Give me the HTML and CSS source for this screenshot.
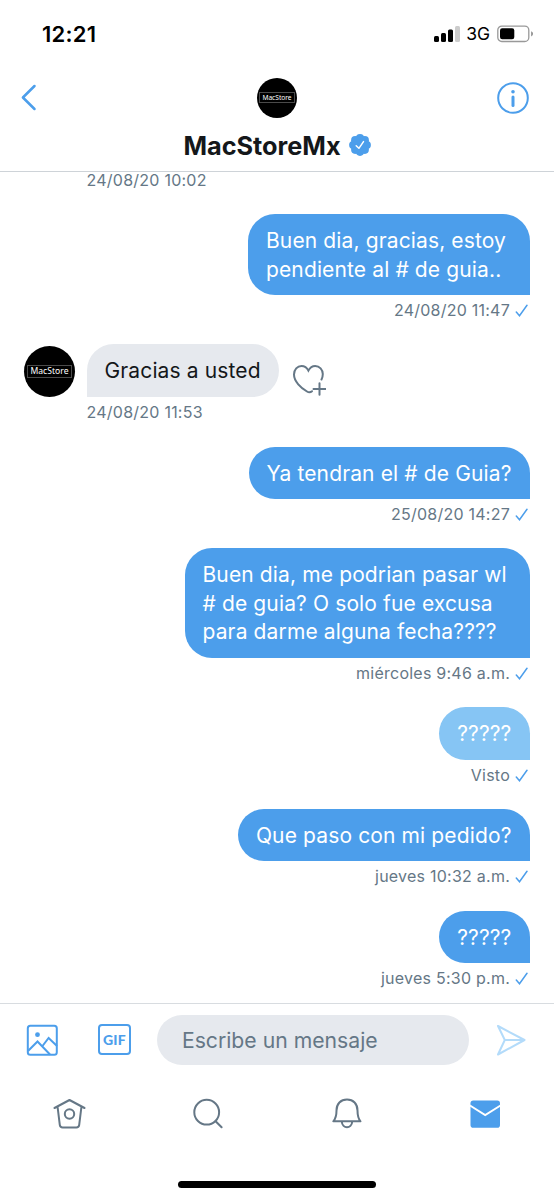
FILE: index.html
```html
<!DOCTYPE html>
<html lang="es">
<head>
<meta charset="utf-8">
<title>MacStoreMx</title>
<link rel="stylesheet" href="styles.css">
</head>
<body>
<div class="phone">
  <div class="status">
    <span class="clock">12:21</span>
    <div class="status-right">
      <svg class="signal" width="26" height="16" viewBox="0 0 26 16"><rect x="0" y="10" width="5" height="6" rx="1.5"/><rect x="7" y="7" width="5" height="9" rx="1.5"/><rect x="14" y="3.5" width="5" height="12.5" rx="1.5"/><rect x="21" y="0" width="5" height="16" rx="1.5" fill="#ccc"/></svg>
      <span class="network">3G</span>
      <svg class="battery" width="37" height="18" viewBox="0 0 37 18"><rect x=".8" y="1.1" width="31" height="15.4" rx="4" fill="none" stroke="#999" stroke-width="1.3"/><rect x="3" y="3.3" width="14.3" height="11" rx="2.2"/><path d="M34.2 6.2v5.2q1.8-.8 1.8-2.6t-1.8-2.6z" fill="#888"/></svg>
    </div>
  </div>

  <header class="header">
    <svg class="back" width="16" height="28" viewBox="0 0 16 28"><path d="M13.5 2 1.900 13.500 13.500 25"/></svg>
    <div class="avatar avatar-small"><span>MacStore</span></div>
    <svg class="info" width="34" height="34" viewBox="0 0 34 34"><circle cx="17" cy="17" r="14.8"/><path d="M17 16v8.5" class="info-stem"/><circle cx="17" cy="10.8" r="1.8" class="info-dot"/></svg>
  </header>
  <div class="title">
    <span class="name">MacStoreMx</span>
    <svg class="verified" width="22" height="22" viewBox="0 0 22 22"><g fill="#4c9eeb"><circle cx="11" cy="11" r="9"/><circle cx="11" cy="4.200" r="4.100"/><circle cx="15.800" cy="6.200" r="4.100"/><circle cx="17.800" cy="11" r="4.100"/><circle cx="15.800" cy="15.800" r="4.100"/><circle cx="11" cy="17.800" r="4.100"/><circle cx="6.200" cy="15.800" r="4.100"/><circle cx="4.200" cy="11" r="4.100"/><circle cx="6.200" cy="6.200" r="4.100"/></g><path d="M7.200 11.700l2.700 2.600 4.600-6.700" fill="none" stroke="#fff" stroke-width="1.500" stroke-linecap="round" stroke-linejoin="round"/></svg>
  </div>

  <main class="messages">
    <div class="meta meta-in meta-first"><span>24/08/20 10:02</span></div>

    <div class="bubble out two-line">Buen dia, gracias, estoy<br>pendiente al # de guia..</div>
    <div class="meta"><span>24/08/20 11:47</span><svg class="tick" width="13" height="13" viewBox="0 0 13 13"><path d="M1.300 8l3.200 3.700L12 1.300"/></svg></div>

    <div class="incoming">
      <div class="avatar avatar-large"><span>MacStore</span></div>
      <div class="bubble in">Gracias a usted</div>
      <svg class="react" width="34" height="32" viewBox="0 0 34 32"><path d="M20 27.2C18.5 28.5 16.8 28.6 15 27.5 9 24 2 17.5 2 10.5 2 5.5 5.4 2 9.5 2c3 0 5.5 1.8 6.9 4.6C17.9 3.8 20.2 2 23.2 2c4.300 0 7.600 3.500 7.600 8.100 0 1.900-.4 3.700-1.300 5.400M27.500 19.200v11.600M21.500 25h12"/></svg>
    </div>
    <div class="meta meta-in"><span>24/08/20 11:53</span></div>

    <div class="bubble out">Ya tendran el # de Guia?</div>
    <div class="meta"><span>25/08/20 14:27</span><svg class="tick" width="13" height="13" viewBox="0 0 13 13"><path d="M1.300 8l3.200 3.700L12 1.300"/></svg></div>

    <div class="bubble out three-line">Buen dia, me podrian pasar wl<br># de guia? O solo fue excusa<br>para darme alguna fecha????</div>
    <div class="meta"><span>miércoles 9:46 a.m.</span><svg class="tick" width="13" height="13" viewBox="0 0 13 13"><path d="M1.300 8l3.200 3.700L12 1.300"/></svg></div>

    <div class="bubble out faded">?????</div>
    <div class="meta"><span>Visto</span><svg class="tick" width="13" height="13" viewBox="0 0 13 13"><path d="M1.300 8l3.200 3.700L12 1.300"/></svg></div>

    <div class="bubble out">Que paso con mi pedido?</div>
    <div class="meta"><span>jueves 10:32 a.m.</span><svg class="tick" width="13" height="13" viewBox="0 0 13 13"><path d="M1.300 8l3.200 3.700L12 1.300"/></svg></div>

    <div class="bubble out">?????</div>
    <div class="meta"><span>jueves 5:30 p.m.</span><svg class="tick" width="13" height="13" viewBox="0 0 13 13"><path d="M1.300 8l3.200 3.700L12 1.300"/></svg></div>
  </main>

  <div class="composer">
    <svg class="photo" width="32" height="32" viewBox="0 0 32 32"><rect x="1.800" y="1.700" width="29" height="29" rx="2.500"/><circle cx="11.500" cy="10.700" r="2.400" fill="#4c9eeb" stroke="none"/><path d="M2 27 11.500 17.500 24 30.500M16.500 22 22.600 14 31 22"/></svg>
    <div class="gif"><span>GIF</span></div>
    <div class="field"><span>Escribe un mensaje</span></div>
    <svg class="send" width="31" height="32" viewBox="0 0 31 32"><path d="M2 2 28.500 16 2 30.500 8.800 16zM8.800 16h19"/></svg>
  </div>

  <nav class="tabs">
    <svg class="tab" width="34" height="34" viewBox="0 0 34 34"><path d="M1.500 11 16.500 3l15 8M4.600 10l2.200 17.900q.3 2.600 2.800 2.600h13.800q2.500 0 2.800-2.600L28.400 10"/><circle cx="16.500" cy="17" r="4.700"/></svg>
    <svg class="tab" width="34" height="34" viewBox="0 0 34 34"><circle cx="15.700" cy="15.200" r="12.400"/><path d="M24.600 24.200l6 6"/></svg>
    <svg class="tab" width="34" height="34" viewBox="0 0 34 34"><path d="M3.300 24.300Q6.500 20.800 6.500 13.500C6.500 6.800 10.700 2.500 17 2.500s10.500 4.300 10.500 11q0 7.300 3 10.800zM11.800 24.800c.5 7.200 9.900 7.200 10.400 0"/></svg>
    <svg class="mail" width="34" height="34" viewBox="0 0 34 34"><rect x="2.500" y="3.500" width="29.500" height="27.200" rx="2.800"/><path d="M2 8.500 17.200 18 32.500 8.500"/></svg>
  </nav>
  <div class="home-bar"></div>
</div>
</body>
</html>
```
FILE: styles.css
```css
* { box-sizing: border-box; }
body { margin: 0; background: #fff; }
svg { display: block; flex: none; }
.phone {
  width: 554px;
  height: 1200px;
  display: flex;
  flex-direction: column;
  overflow: hidden;
  font-family: Inter, "Liberation Sans", sans-serif;
  color: #14171a;
  background: #fff;
}

.status {
  height: 68px;
  flex: none;
  display: flex;
  justify-content: space-between;
  align-items: center;
  padding: 0 20px 0 42px;
  color: #000;
}
.clock { font-size: 22px; font-weight: 600; line-height: 24px; letter-spacing: .25px; }
.status-right { display: flex; align-items: center; }
.network { font-size: 17.500px; line-height: 24px; margin: 0 7px 0 6px; }

.header {
  height: 59px;
  flex: none;
  display: grid;
  grid-template-columns: 1fr 40px 1fr;
  align-items: center;
  padding: 0 21px;
}
.back { fill: none; stroke: #4c9eeb; stroke-width: 2.500; stroke-linecap: round; stroke-linejoin: round; }
.info { justify-self: end; margin-right: 3.300px; fill: none; stroke: #4c9eeb; stroke-width: 2; }
.info-stem { stroke-width: 3; stroke-linecap: round; }
.info-dot { fill: #4c9eeb; stroke: none; }
.avatar {
  flex: none;
  display: flex;
  align-items: center;
  justify-content: center;
  border-radius: 50%;
  background: #000;
  color: #fff;
  font-family: "Noto Sans", sans-serif;
}
.avatar span { border: 1px solid #4a4a4a; text-align: center; white-space: nowrap; }
.avatar-small { width: 40px; height: 40px; }
.avatar-small span { width: 36px; font-size: 6.600px; line-height: 9px; }
.avatar-large { width: 51px; height: 51px; margin-top: 2px; }
.avatar-large span { width: 45px; font-size: 8.600px; line-height: 11px; }

.title {
  height: 44.500px;
  flex: none;
  display: flex;
  justify-content: center;
  padding: 7px 0 0;
  border-bottom: 1.500px solid #ced3d8;
}
.name { font-size: 25.300px; line-height: 24px; font-weight: 700; }
.verified { margin-left: 8px; }

.messages {
  height: 831.500px;
  flex: none;
  display: flex;
  flex-direction: column;
  align-items: flex-end;
  overflow: hidden;
  padding: 0 24px;
}
.bubble {
  flex: none;
  padding: 13px 18.500px 11px 18px;
  font-size: 21px;
  line-height: 28.500px;
  letter-spacing: .13px;
  white-space: nowrap;
}
.out { color: #fff; background: #4c9eeb; border-radius: 27px 27px 0 27px; }
.two-line { width: 282px; }
.three-line { width: 345.500px; }
.in { background: #e6e9ee; border-radius: 27px 27px 27px 0; }
.faded { background: #86c5f4; }
.incoming { flex: none; align-self: stretch; display: flex; align-items: flex-start; }
.incoming .bubble { margin-left: 11.500px; }
.react { margin: 20px 0 0 12.500px; fill: none; stroke: #657786; stroke-width: 2; stroke-linecap: round; }
.meta {
  height: 49.250px;
  flex: none;
  display: flex;
  padding-top: 5px;
  font-size: 16px;
  line-height: 20px;
  color: #657786;
  letter-spacing: .24px;
  white-space: nowrap;
}
.meta-in { align-self: flex-start; margin-left: 62.500px; }
.meta-first { height: 42.600px; padding-top: 0; line-height: 17px; }
.tick { margin: 4px 2px 0 5px; fill: none; stroke: #4c9eeb; stroke-width: 1.500; stroke-linecap: round; }

.composer {
  height: 74px;
  flex: none;
  display: flex;
  align-items: center;
  padding: 0 27px 2px 26px;
  border-top: 1px solid #d8dce0;
}
.photo { fill: none; stroke: #4c9eeb; stroke-width: 2; }
.gif {
  width: 33px;
  height: 31px;
  margin-left: 40px;
  border: 2px solid #4c9eeb;
  border-radius: 4px;
  display: flex;
  align-items: center;
  justify-content: center;
  color: #4c9eeb;
  font-family: Lato, sans-serif;
  font-size: 14px;
  font-weight: 900;
  letter-spacing: .2px;
}
.field {
  width: 313px;
  height: 50px;
  margin-left: 26px;
  padding-left: 25px;
  border-radius: 25px;
  background: #e6e9ee;
  color: #657786;
  font-size: 21.200px;
  line-height: 50px;
  white-space: nowrap;
}
.send { margin-left: 27px; fill: none; stroke: #b3dbfa; stroke-width: 2; stroke-linejoin: round; }

.tabs {
  height: 104px;
  flex: none;
  display: grid;
  grid-template-columns: repeat(4, 1fr);
  justify-items: center;
  padding: 20px 0 0 1px;
}
.tab { fill: none; stroke: #657786; stroke-width: 2; stroke-linecap: round; stroke-linejoin: round; }
.mail { fill: #4c9eeb; }
.mail path { fill: none; stroke: #fff; stroke-width: 2; }
.home-bar { width: 198px; height: 7px; flex: none; align-self: center; border-radius: 4px; background: #000; }
```
